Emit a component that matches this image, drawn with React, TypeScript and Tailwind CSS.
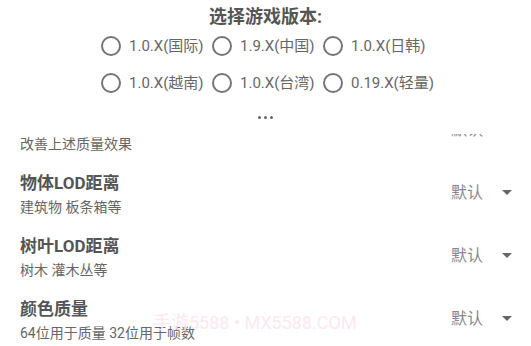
import React from "react";

const font = { fontFamily: 'Roboto, "Noto Sans CJK SC", sans-serif' };

const versions = [
  "1.0.X(国际)",
  "1.9.X(中国)",
  "1.0.X(日韩)",
  "1.0.X(越南)",
  "1.0.X(台湾)",
  "0.19.X(轻量)",
];

const rows = [
  { title: "细节质量", sub: "改善上述质量效果" },
  { title: "物体LOD距离", sub: "建筑物 板条箱等" },
  { title: "树叶LOD距离", sub: "树木 灌木丛等" },
  { title: "颜色质量", sub: "64位用于质量 32位用于帧数" },
];

function Radio({ label }: { label: string }) {
  return (
    <div className="flex items-center h-[24px]">
      <div className="w-[20px] h-[20px] rounded-full border-2 border-[#757575] shrink-0" />
      <span className="ml-[8px] text-[15px] text-[#666666] whitespace-nowrap leading-[24px]">{label}</span>
    </div>
  );
}

function Arrow() {
  return (
    <svg width="10" height="5" viewBox="0 0 10 5" className="block">
      <path d="M0 0 L10 0 L5 5 Z" fill="#666666" />
    </svg>
  );
}

export default function App() {
  return (
    <div className="relative w-[531px] h-[346px] overflow-hidden bg-white" style={font}>
      <div className="h-[134px] flex flex-col items-center">
        <div className="h-[34px] leading-[34px] text-[18px] font-bold text-[#555555]">选择游戏版本:</div>
        <div className="pl-[4px] grid grid-cols-[111px_111px_111px] gap-y-[13px]">
          {versions.map((v) => (
            <Radio key={v} label={v} />
          ))}
        </div>
        <div className="mt-[21px] flex gap-[3px]">
          <span className="w-[3px] h-[3px] rounded-full bg-[#666666]" />
          <span className="w-[3px] h-[3px] rounded-full bg-[#666666]" />
          <span className="w-[3px] h-[3px] rounded-full bg-[#666666]" />
        </div>
      </div>
      <div className="h-[212px] overflow-hidden">
        <div className="mt-[-36px]">
          {rows.map((r) => (
            <div key={r.title} className="h-[63px] flex items-start pl-[20px] pr-[19px]">
              <div className="flex-1 pt-[10px]">
                <div className="text-[17px] font-bold text-[#555555] leading-[25px]">{r.title}</div>
                <div className="text-[14px] text-[#666666] leading-[22px]">{r.sub}</div>
              </div>
              <div className="h-[63px] flex items-center">
                <span className="text-[16px] text-[#888888] leading-[20px]">默认</span>
                <span className="ml-[19px]">
                  <Arrow />
                </span>
              </div>
            </div>
          ))}
        </div>
      </div>
      <div className="absolute left-[153px] top-[312px] text-[18px] leading-[22px] text-[#fde8f1] whitespace-nowrap pointer-events-none">
        手游5588 • MX5588.COM
      </div>
    </div>
  );
}
